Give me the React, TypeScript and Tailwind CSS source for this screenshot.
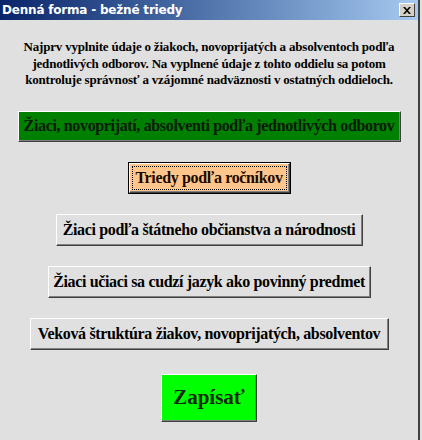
const serif = { fontFamily: '"Liberation Serif", "Times New Roman", serif' }

function Bevel({
  children,
  className,
  focused = false,
}: {
  children: React.ReactNode
  className: string
  focused?: boolean
}) {
  if (focused) {
    return (
      <div className={`shrink-0 border border-black ${className}`}>
        <div className="h-full border border-t-white border-l-white border-b-[#404040] border-r-[#404040] shadow-[inset_-1px_-1px_0_#808080] p-[2px]">
          <div className="h-full flex items-center justify-center border border-dotted border-black">
            {children}
          </div>
        </div>
      </div>
    )
  }
  return (
    <div
      className={`shrink-0 flex items-center justify-center border border-t-white border-l-white border-b-[#404040] border-r-[#404040] shadow-[inset_-1px_-1px_0_#808080] ${className}`}
    >
      {children}
    </div>
  )
}

const label = "whitespace-nowrap font-bold text-[16px] tracking-[-0.35px]"

export default function App() {
  return (
    <div className="w-[422px] h-[440px] bg-[#e0e0e0] flex overflow-hidden">
      <div className="w-[420px] h-full flex flex-col border-r-2 border-r-[#404040]">
        <div className="h-[20px] shrink-0 flex items-center justify-between pl-[2px] pr-[3px] bg-gradient-to-r from-[#0a246a] to-[#a6caf0]">
          <span
            className="text-white font-bold text-[12px] leading-none"
            style={{ fontFamily: '"DejaVu Sans", Tahoma, sans-serif', letterSpacing: '-0.2px' }}
          >
            Denná forma - bežné triedy
          </span>
          <div className="w-[16px] h-[14px] bg-[#d4d0c8] border border-t-white border-l-white border-b-[#404040] border-r-[#404040] flex items-center justify-center">
            <svg width="8" height="7" viewBox="0 0 8 7">
              <path d="M0 0h2l2 2.2L6 0h2L5 3.5 8 7H6L4 4.8 2 7H0l3-3.5z" fill="black" />
            </svg>
          </div>
        </div>
        <div className="flex-1 flex flex-col items-center">
          <p
            className="mt-[19px] text-center font-bold text-[13px] leading-[16.5px] text-black tracking-[-0.2px] whitespace-nowrap"
            style={serif}
          >
            Najprv vyplnite údaje o žiakoch, novoprijatých a absolventoch podľa
            <br />
            jednotlivých odborov. Na vyplnené údaje z tohto oddielu sa potom
            <br />
            kontroluje správnosť a vzájomné nadväznosti v ostatných oddieloch.
          </p>
          <Bevel className="mt-[22px] w-[383px] h-[31px] bg-[#008000]">
            <span className={`${label} text-[#0a1a0a]`} style={serif}>
              Žiaci, novoprijatí, absolventi podľa jednotlivých odborov
            </span>
          </Bevel>
          <Bevel focused className="mt-[20px] w-[163px] h-[32px] bg-[#ffc58a]">
            <span className={`${label} text-[#1a0a00]`} style={serif}>
              Triedy podľa ročníkov
            </span>
          </Bevel>
          <Bevel className="mt-[20px] w-[307px] h-[32px]">
            <span className={`${label} text-black`} style={serif}>
              Žiaci podľa štátneho občianstva a národnosti
            </span>
          </Bevel>
          <Bevel className="mt-[20px] w-[323px] h-[32px]">
            <span className={`${label} text-black`} style={serif}>
              Žiaci učiaci sa cudzí jazyk ako povinný predmet
            </span>
          </Bevel>
          <Bevel className="mt-[20px] w-[359px] h-[32px]">
            <span className={`${label} text-black`} style={serif}>
              Veková štruktúra žiakov, novoprijatých, absolventov
            </span>
          </Bevel>
          <Bevel className="mt-[24px] w-[96px] h-[48px] bg-[#00ff00]">
            <span className="whitespace-nowrap font-bold text-[21px] text-[#0f2a0f]" style={serif}>
              Zapísať
            </span>
          </Bevel>
        </div>
      </div>
    </div>
  )
}
